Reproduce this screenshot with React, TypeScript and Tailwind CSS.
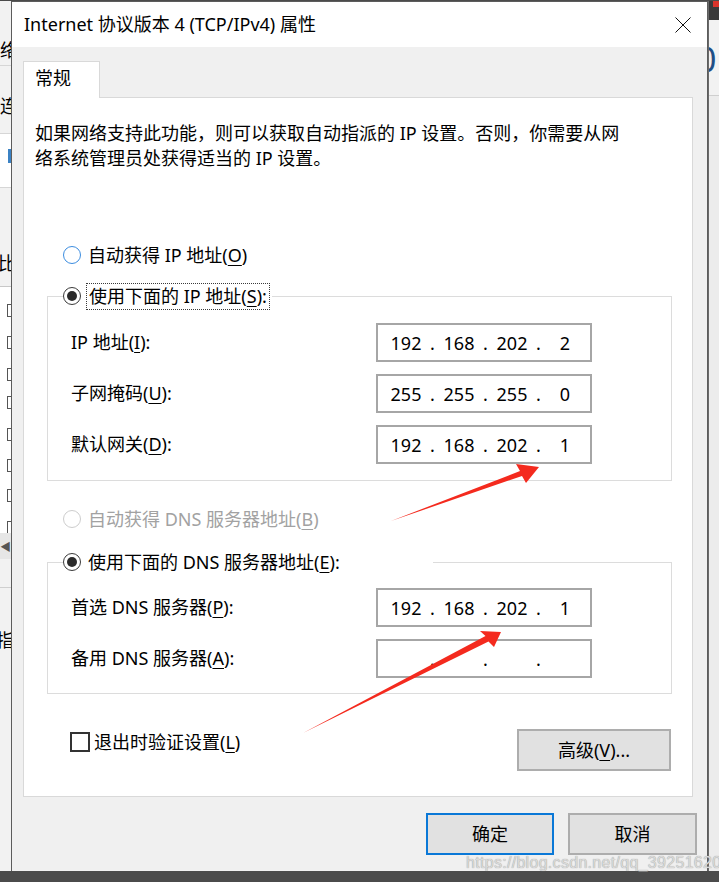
import React from 'react';

/* ── Bits ─────────────────────────────────────────── */

const FONT = "font-['Noto_Sans','Noto_Sans_CJK_SC',sans-serif]";

function Radio({ checked = false, tone = 'dark' }: { checked?: boolean; tone?: 'dark' | 'blue' | 'off' }) {
  const ring =
    tone === 'blue' ? 'border-[#3c8de0]' : tone === 'off' ? 'border-[#cdcdcd]' : 'border-[#3a3a3a]';
  return (
    <span className={`flex h-[18px] w-[18px] shrink-0 items-center justify-center rounded-full border-[1.5px] bg-white ${ring}`}>
      {checked && <span className="h-[10px] w-[10px] rounded-full bg-[#2b2b2b]" />}
    </span>
  );
}

function IpBox({ parts }: { parts: string[] }) {
  return (
    <div className="flex h-[39px] w-[216px] items-center border-2 border-[#a6a6a6] bg-white pl-[8px] text-[18px] leading-none text-black">
      {parts.map((p, i) => (
        <React.Fragment key={i}>
          <span className="w-[40px] text-center">{p}</span>
          {i < 3 && <span className="w-[13px] text-center">.</span>}
        </React.Fragment>
      ))}
    </div>
  );
}

function FieldRow({ label, parts }: { label: React.ReactNode; parts: string[] }) {
  return (
    <div className="flex items-center pl-[23px]">
      <span className="w-[305px]">{label}</span>
      <IpBox parts={parts} />
    </div>
  );
}

function Key({ k }: { k: string }) {
  return <span className="underline underline-offset-[3px] decoration-[1px]">{k}</span>;
}

function WinButton({ children, primary = false, w }: { children: React.ReactNode; primary?: boolean; w: string }) {
  return (
    <div
      className={`flex h-[42px] items-center justify-center border-2 bg-[#e1e1e1] ${w} ${
        primary ? 'border-[#0a78d7]' : 'border-[#adadad]'
      }`}
    >
      {children}
    </div>
  );
}

/* ── Background windows (edges only) ──────────────── */

function LeftStrip() {
  const boxes = [303, 335, 367, 395, 427, 458, 488, 520];
  return (
    <div className="relative h-full w-[11px] shrink-0 overflow-hidden bg-[#f2f2f2] text-[18px] leading-none text-black">
      <span className="absolute left-0 top-[40px]">络</span>
      <div className="absolute left-0 top-[64px] h-px w-full bg-[#d6d6d6]" />
      <span className="absolute left-0 top-[96px]">连</span>
      <div className="absolute left-0 top-[132px] h-[55px] w-full border-y border-[#d6d6d6] bg-white" />
      <div className="absolute left-[8px] top-[148px] h-[14px] w-[3px] bg-[#3b82c4]" />
      <span className="absolute left-[-2px] top-[253px]">比</span>
      <div className="absolute left-0 top-[285px] h-px w-full bg-[#c8c8c8]" />
      <div className="absolute left-0 top-[286px] h-[246px] w-full bg-white" />
      {boxes.map((y) => (
        <div key={y} className="absolute left-[7px] h-[13px] w-[8px] border border-[#555] bg-white" style={{ top: y }} />
      ))}
      <div className="absolute left-0 top-[532px] flex h-[26px] w-full items-center bg-[#e6e6e6] text-[11px] text-[#555]">◀</div>
      <div className="absolute left-0 top-[586px] h-px w-full bg-[#cfcfcf]" />
      <span className="absolute left-[-4px] top-[630px]">指</span>
    </div>
  );
}

function RightStrip() {
  return (
    <div className="relative h-full w-[11px] shrink-0 overflow-hidden border-l border-[#6a6a6a] bg-[#ececec]">
      <div className="h-[19px] bg-[#3a3a3a]">
        <div className="ml-[4px] h-[6px] bg-[#d9342b]" />
      </div>
      <div className="h-[76px] border-b border-[#cfcfcf] bg-[#f2f2f2] pt-[22px] text-[34px] leading-none text-[#1f4f86]">
        <span className="ml-[-12px]">0</span>
      </div>
    </div>
  );
}

/* ── Arrows ───────────────────────────────────────── */

function Arrows() {
  return (
    <svg className="pointer-events-none absolute left-0 top-0" width="719" height="882" viewBox="0 0 719 882">
      <polygon points="391,521 520,471 516,464 539,467 526,483 522,476" fill="#f42a1e" />
      <polygon points="303,733 485.5,636 480,631 501,632 494,647 488.5,641.5" fill="#f42a1e" />
    </svg>
  );
}

/* ── Dialog ───────────────────────────────────────── */

function Dialog() {
  return (
    <div className="flex h-full w-[697px] shrink-0 flex-col border-x border-t border-[#5c5c5c] bg-[#f0f0f0]">
      {/* title bar */}
      <div className="flex h-[45px] items-center justify-between bg-white pl-[12px] pr-[16px] text-[18px]">
        <span className="pb-[1px]">Internet 协议版本 4 (TCP/IPv4) 属性</span>
        <svg width="16" height="16" viewBox="0 0 16 16">
          <path d="M0.5 0.5 L15.5 15.5 M15.5 0.5 L0.5 15.5" stroke="#111" strokeWidth="1" fill="none" />
        </svg>
      </div>

      <div className="flex flex-1 flex-col pt-[14px]">
        {/* tab */}
        <div className="relative z-10 ml-[11px] mb-[-1px] flex h-[37px] w-[77px] items-center border-x border-t border-[#d9d9d9] bg-white pb-[4px] pl-[11px]">
          常规
        </div>

        {/* panel */}
        <div className="ml-[11px] flex w-[670px] flex-col border border-[#d9d9d9] bg-white pt-[23px] pb-[25px]">
          <p className="whitespace-nowrap pl-[11px] leading-[25px]">
            如果网络支持此功能，则可以获取自动指派的 IP 设置。否则，你需要从网
            <br />
            络系统管理员处获得适当的 IP 设置。
          </p>

          <div className="mt-[70px] flex h-[28px] items-center gap-[7px] pl-[39px]">
            <Radio tone="blue" />
            <span>
              自动获得 IP 地址(<Key k="O" />)
            </span>
          </div>

          <fieldset className="ml-[23px] mt-[13px] w-[625px] border border-[#dcdcdc]">
            <legend className="ml-[15px] w-[209px]">
              <div className="flex h-[28px] items-center gap-[5px]">
                <Radio checked />
                <span className="flex h-[27px] items-center border border-dotted border-[#3a3a3a] px-[2px]">
                  使用下面的 IP 地址(<Key k="S" />):
                </span>
              </div>
            </legend>
            <div className="flex flex-col gap-[12px] pt-[13px] pb-[16px]">
              <FieldRow label={<>IP 地址(<Key k="I" />):</>} parts={['192', '168', '202', '2']} />
              <FieldRow label={<>子网掩码(<Key k="U" />):</>} parts={['255', '255', '255', '0']} />
              <FieldRow label={<>默认网关(<Key k="D" />):</>} parts={['192', '168', '202', '1']} />
            </div>
          </fieldset>

          <div className="mt-[24px] flex h-[28px] items-center gap-[7px] pl-[39px] text-[#a2a2a2]">
            <Radio tone="off" />
            <span>
              自动获得 DNS 服务器地址(<Key k="B" />)
            </span>
          </div>

          <fieldset className="ml-[23px] mt-[15px] w-[625px] border border-[#dcdcdc]">
            <legend className="ml-[15px] w-[370px]">
              <div className="flex h-[28px] items-center gap-[7px]">
                <Radio checked />
                <span>
                  使用下面的 DNS 服务器地址(<Key k="E" />):
                </span>
              </div>
            </legend>
            <div className="flex flex-col gap-[12px] pt-[12px] pb-[15px]">
              <FieldRow label={<>首选 DNS 服务器(<Key k="P" />):</>} parts={['192', '168', '202', '1']} />
              <FieldRow label={<>备用 DNS 服务器(<Key k="A" />):</>} parts={['', '', '', '']} />
            </div>
          </fieldset>

          <div className="mt-[35px] flex items-start justify-between pl-[46px] pr-[21px]">
            <div className="flex h-[26px] items-center gap-[4px]">
              <span className="h-[20px] w-[20px] border-2 border-[#333] bg-white" />
              <span>
                退出时验证设置(<Key k="L" />)
              </span>
            </div>
            <WinButton w="w-[154px]">
              高级(<Key k="V" />)...
            </WinButton>
          </div>
        </div>

        {/* footer */}
        <div className="mt-[16px] flex justify-end gap-[14px] pr-[10px]">
          <WinButton primary w="w-[128px]">确定</WinButton>
          <WinButton w="w-[129px]">取消</WinButton>
        </div>
      </div>
    </div>
  );
}

/* ── Page ─────────────────────────────────────────── */

export default function App() {
  return (
    <div className={`relative h-[882px] w-[719px] overflow-hidden bg-[#4b4b4b] pt-[1px] text-[18px] text-black ${FONT}`}>
      <div className="flex h-[870px]">
        <LeftStrip />
        <Dialog />
        <RightStrip />
      </div>
      <span className="absolute left-[466px] top-[851px] font-['Liberation_Sans',sans-serif] text-[16px] tracking-[0.3px] text-[#dadada] [text-shadow:0_0_1px_#8a8a8a]">
        https://blog.csdn.net/qq_39251620
      </span>
      <Arrows />
    </div>
  );
}
